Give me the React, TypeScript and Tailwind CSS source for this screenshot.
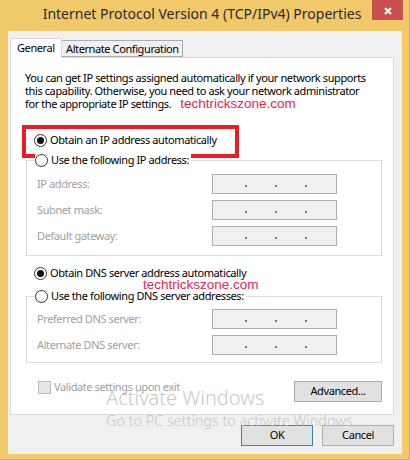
import React from "react";

// IPv4 properties dialog, Windows 8 look

function Radio({ checked, label }: { checked?: boolean; label: string }) {
  return (
    <span className="flex items-center h-[16px]">
      <span className="w-[13px] h-[13px] rounded-full border border-[#333333] bg-white flex items-center justify-center">
        {checked && <span className="w-[7px] h-[7px] rounded-full bg-[#111111]" />}
      </span>
      <span className="ml-[3px] text-[11px] leading-[16px] text-black whitespace-nowrap">{label}</span>
    </span>
  );
}

function IpBox() {
  return (
    <div className="w-[125px] h-[20px] bg-[#f0f0f0] border border-[#adadad] flex items-end pl-[32px] pb-[6px] gap-[28px]">
      <span className="w-[2px] h-[2px] bg-[#7a7a7a]" />
      <span className="w-[2px] h-[2px] bg-[#7a7a7a]" />
      <span className="w-[2px] h-[2px] bg-[#7a7a7a]" />
    </div>
  );
}

function FieldRow({ label }: { label: string }) {
  return (
    <div className="flex items-center h-[20px] pl-[10px]">
      <span className="w-[175px] text-[11px] text-[#a0a0a0] whitespace-nowrap">{label}</span>
      <IpBox />
    </div>
  );
}

function Group({ legend, fields, top, bottom }: { legend: string; fields: string[]; top: string; bottom: string }) {
  return (
    <fieldset className={`ml-[1px] w-[356px] border border-[#dcdcdc] ${bottom}`}>
      <legend className="ml-[8px] pr-[2px] bg-white">
        <Radio label={legend} />
      </legend>
      <div className={`flex flex-col gap-[6px] ${top}`}>
        {fields.map((f) => (
          <FieldRow key={f} label={f} />
        ))}
      </div>
    </fieldset>
  );
}

function Button({ children, width, primary }: { children: React.ReactNode; width: string; primary?: boolean }) {
  return (
    <button
      className={`${width} h-[21px] bg-[#e1e1e1] border ${primary ? "border-[#3c7fb1]" : "border-[#adadad]"} text-[11px] text-black flex items-center justify-center`}
    >
      {children}
    </button>
  );
}

export default function App() {
  return (
    <div className="relative w-[410px] h-[460px] bg-[#f1c96b] border-r border-b border-[#d6ac52] font-['Segoe_UI','Noto_Sans',sans-serif] tracking-[-0.4px] overflow-hidden">
      {/* title bar */}
      <div className="flex h-[31px] pl-[8px]">
        <div className="flex-1 pl-[24px] pt-[4px] text-center text-[14px] leading-[20px] tracking-normal text-[#2b2b2b] whitespace-nowrap">
          Internet Protocol Version 4 (TCP/IPv4) Properties
        </div>
        <div className="w-[31px] h-[20px] mr-[6px] bg-[#c75050] flex items-center justify-center pt-[2px]">
          <svg width="8" height="8" viewBox="0 0 8 8">
            <path d="M1 1L7 7M7 1L1 7" stroke="white" strokeWidth="2" />
          </svg>
        </div>
      </div>

      {/* client area */}
      <div className="ml-[8px] w-[394px] h-[423px] bg-[#f0f0f0] pl-[2px] pt-[7px]">
        <div className="flex items-end h-[19px]">
          <div className="relative z-10 w-[52px] h-[20px] mb-[-1px] bg-white border border-b-0 border-[#d9d9d9] pl-[6px] text-[11px] leading-[18px] text-black">
            General
          </div>
          <div className="w-[121px] h-[17px] border border-l-0 border-[#adadad] bg-[#f0f0f0] pl-[4px] text-[11px] leading-[15px] text-black whitespace-nowrap">
            Alternate Configuration
          </div>
        </div>

        <div className="w-[384px] h-[358px] bg-white border border-[#d9d9d9] pl-[14px] pt-[13px]">
          <p className="text-[11px] leading-[13px] text-black whitespace-nowrap">
            You can get IP settings assigned automatically if your network supports
            <br />
            this capability. Otherwise, you need to ask your network administrator
            <br />
            for the appropriate IP settings.
            <span className="ml-[9px] font-['Liberation_Sans',Arial,sans-serif] text-[13.5px] tracking-normal text-[#eb2352]">
              techtrickszone.com
            </span>
          </p>

          <div className="mt-[15px] ml-[-3px] w-[217px] h-[33px] border-4 border-[#ed1c24] pl-[8px] pt-[3px]">
            <Radio checked label="Obtain an IP address automatically" />
          </div>

          <div className="mt-[-6px]">
            <Group
              legend="Use the following IP address:"
              fields={["IP address:", "Subnet mask:", "Default gateway:"]}
              top="pt-[6px]"
              bottom="pb-[9px]"
            />
          </div>

          <div className="mt-[9px] ml-[9px]">
            <Radio checked label="Obtain DNS server address automatically" />
          </div>

          <div className="mt-[7px]">
            <Group
              legend="Use the following DNS server addresses:"
              fields={["Preferred DNS server:", "Alternate DNS server:"]}
              top="pt-[5px]"
              bottom="pb-[7px]"
            />
          </div>

          <div className="mt-[18px] flex items-start justify-between pr-[11px]">
            <div className="ml-[13px] flex items-center h-[13px]">
              <span className="w-[13px] h-[13px] bg-[#e6e6e6] border border-[#bcbcbc]" />
              <span className="ml-[3px] text-[11px] text-[#a0a0a0] whitespace-nowrap">Validate settings upon exit</span>
            </div>
            <Button width="w-[88px]">Advanced...</Button>
          </div>
        </div>

        <div className="mt-[10px] flex justify-end gap-[9px] pr-[8px]">
          <Button width="w-[72px]" primary>
            OK
          </Button>
          <Button width="w-[72px]">Cancel</Button>
        </div>
      </div>

      {/* watermarks drawn over the dialog */}
      <div className="pointer-events-none absolute left-[143px] top-[277px] font-['Liberation_Sans',Arial,sans-serif] text-[13.5px] leading-[16px] tracking-normal text-[#eb2352]">
        techtrickszone.com
      </div>
      <div className="pointer-events-none absolute left-[106px] top-[386px] text-[20px] leading-[24px] tracking-normal font-light text-[#b9b9b9]/80 whitespace-nowrap">
        Activate Windows
      </div>
      <div className="pointer-events-none absolute left-[106px] top-[412px] text-[14.4px] leading-[18px] tracking-normal font-light text-[#b9b9b9]/80 whitespace-nowrap">
        Go to PC settings to activate Windows.
      </div>
    </div>
  );
}
